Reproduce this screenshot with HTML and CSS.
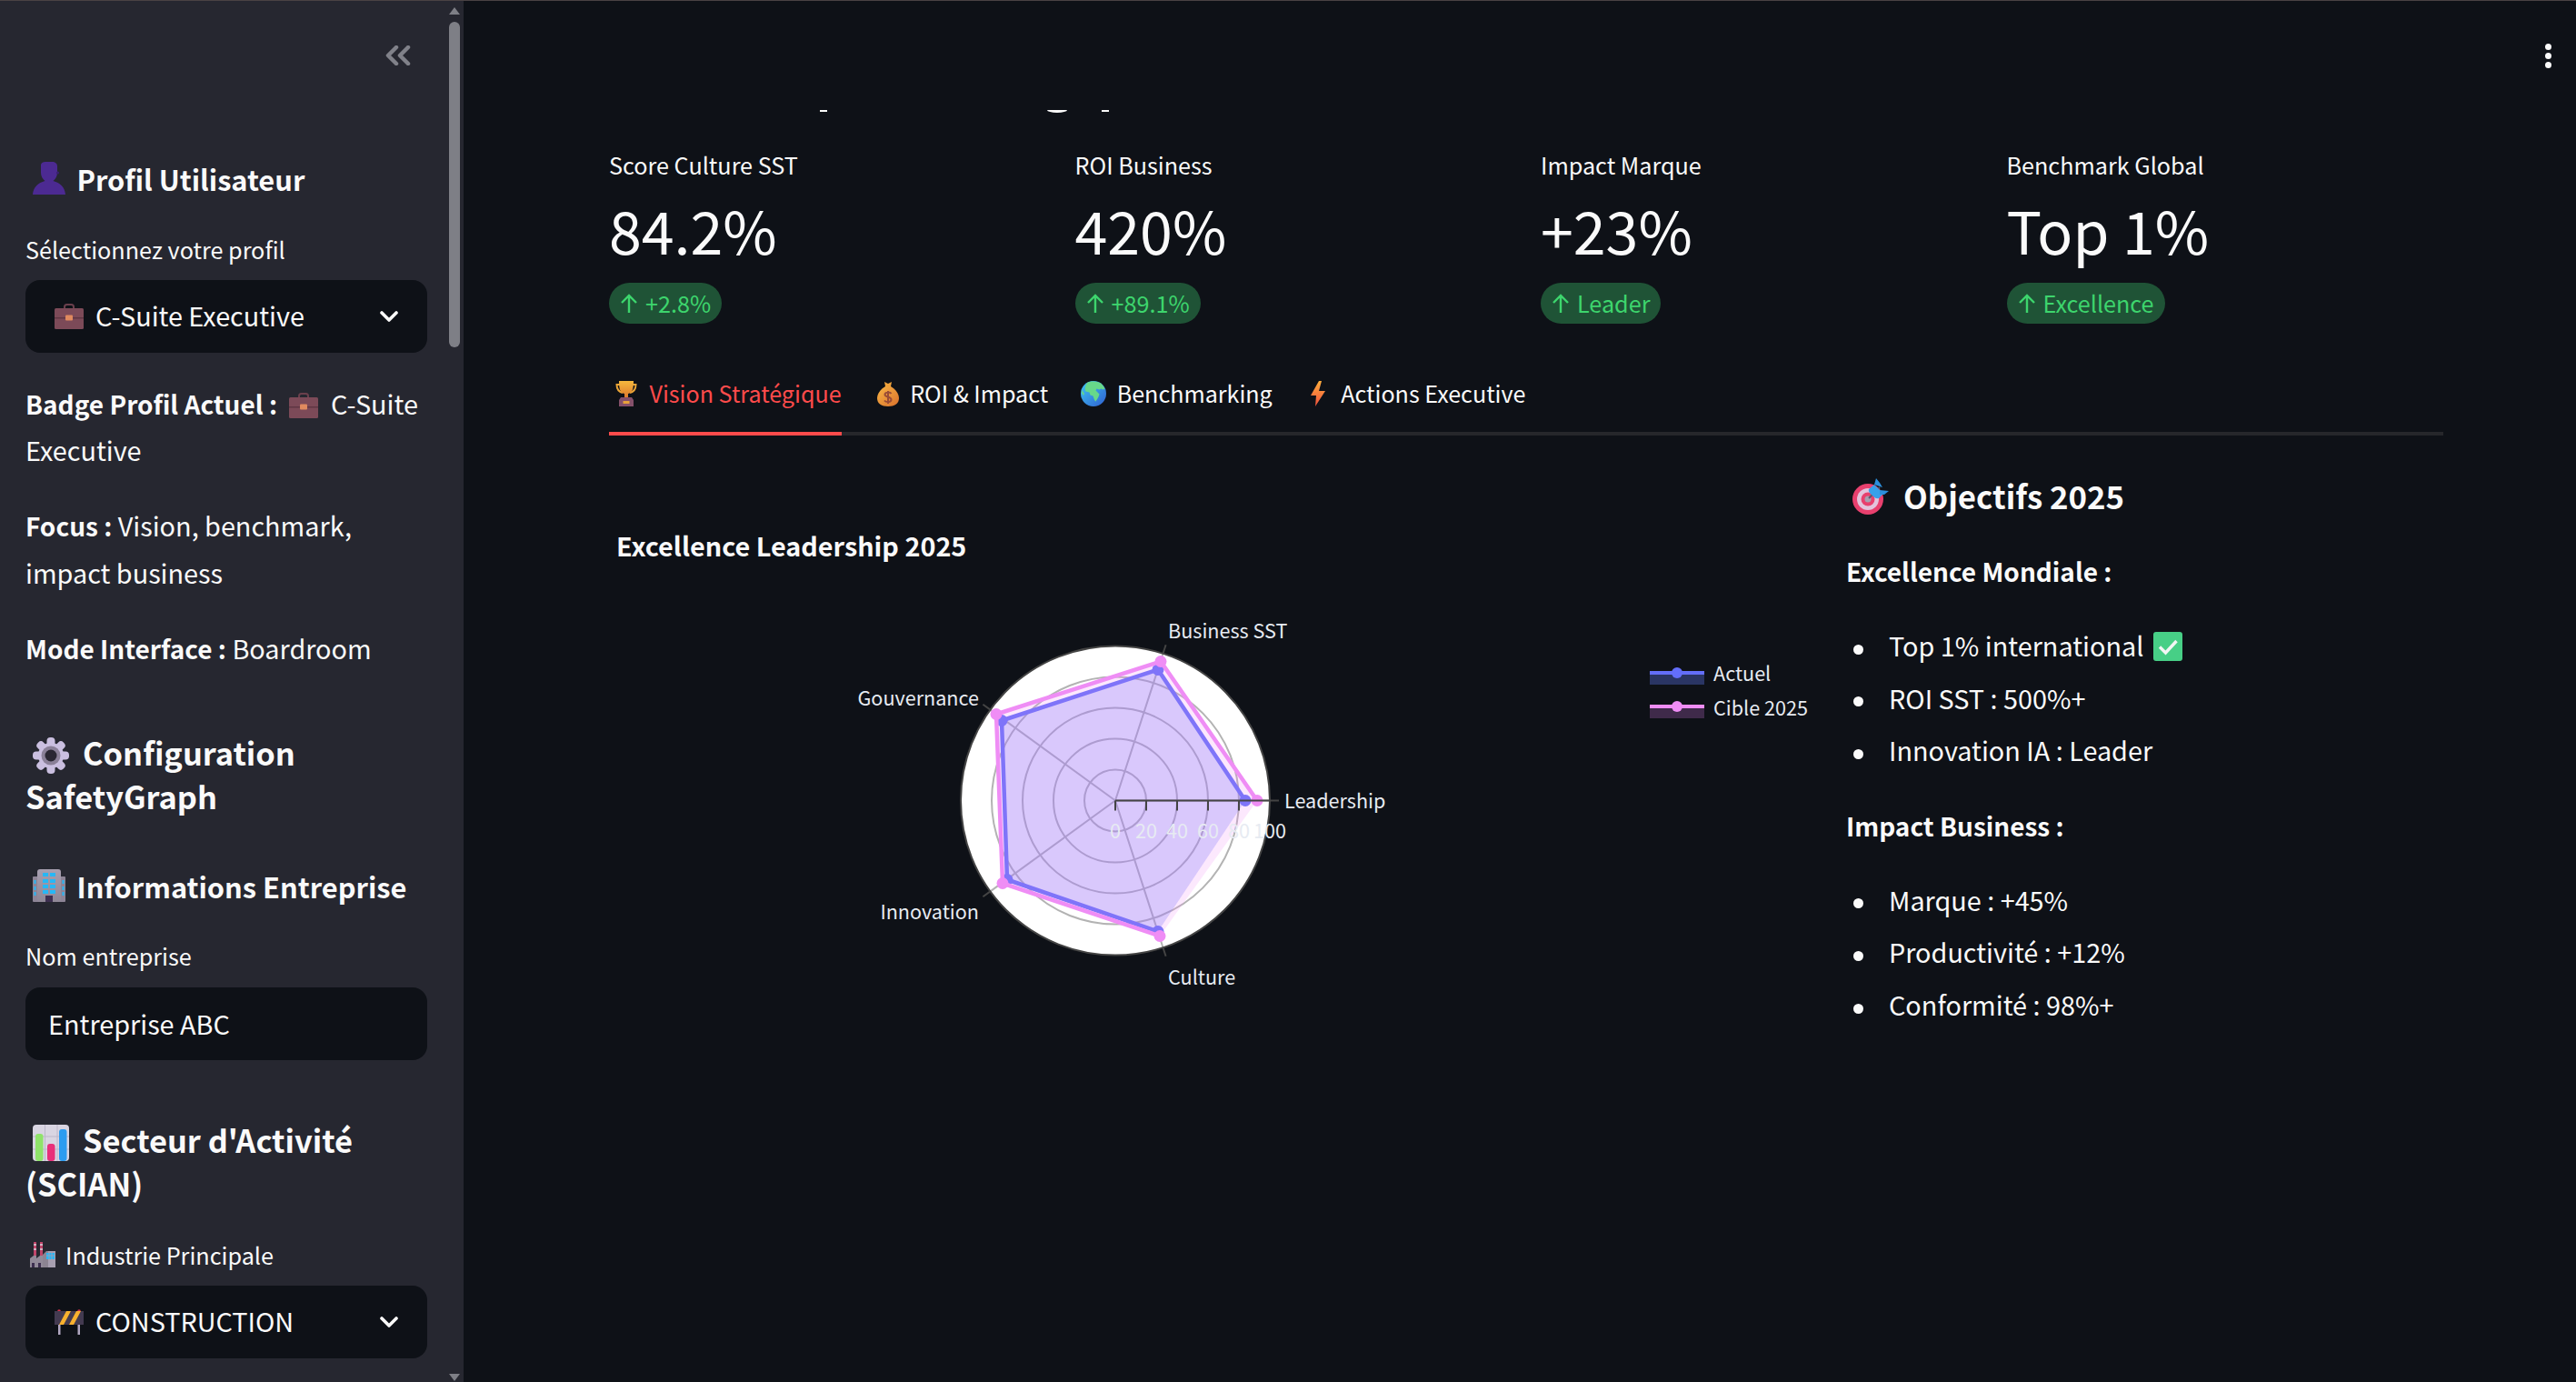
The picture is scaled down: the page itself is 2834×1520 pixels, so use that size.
FILE: index.html
```html
<!DOCTYPE html>
<html lang="fr">
<head>
<meta charset="utf-8">
<title>SafetyGraph</title>
<link rel="stylesheet" href="styles.css">
</head>
<body>
<svg class="defs" width="0" height="0" aria-hidden="true">
  <defs>
    <linearGradient id="gTrophy" x1="0" y1="0" x2="0" y2="1"><stop offset="0" stop-color="#f5b93e"/><stop offset="1" stop-color="#dd7a2c"/></linearGradient>
    <linearGradient id="gBag" x1="0" y1="0" x2="1" y2="1"><stop offset="0" stop-color="#f8b545"/><stop offset="1" stop-color="#d9702c"/></linearGradient>
    <linearGradient id="gBolt" x1="0" y1="0" x2="0" y2="1"><stop offset="0" stop-color="#fdae3d"/><stop offset="1" stop-color="#f0503c"/></linearGradient>
    <linearGradient id="gGlobe" x1="0" y1="0" x2="1" y2="1"><stop offset="0" stop-color="#3fc7f5"/><stop offset="1" stop-color="#2f5fd0"/></linearGradient>
    <linearGradient id="gBuild" x1="0" y1="0" x2="0" y2="1"><stop offset="0" stop-color="#a79fb0"/><stop offset="1" stop-color="#8f8796"/></linearGradient>
    <symbol id="i-person" viewBox="0 0 36 36">
      <path d="M9 3.500C9 1.500 11 0 14 0h7c4 0 6 2 6 5v7c0 4-2 7-4.500 9 7.500 2 13 7 13.500 15H0c.5-8 6-13 13.500-15C11 19 9 16 9 12z" fill="#4c2a92"/>
      <circle cx="27.500" cy="12" r="1.600" fill="#3a2070"/>
    </symbol>
    <symbol id="i-case" viewBox="0 0 32 28">
      <path d="M11 6V3.500C11 2 12 1 13.500 1h5C20 1 21 2 21 3.500V6" fill="none" stroke="#6a3f4c" stroke-width="2"/>
      <rect y="5" width="32" height="23" rx="1.500" fill="#7c4a58"/>
      <rect y="15" width="32" height="1.500" fill="#5f3643"/>
      <rect x="12" y="12.500" width="8" height="6" rx="1" fill="#e08a5f"/>
    </symbol>
    <symbol id="i-gear" viewBox="0 0 40 40">
      <g fill="#cabfe0">
        <circle cx="20" cy="20" r="14"/>
        <rect x="15.500" y="0" width="9" height="40" rx="4"/>
        <rect x="15.500" y="0" width="9" height="40" rx="4" transform="rotate(45 20 20)"/>
        <rect x="15.500" y="0" width="9" height="40" rx="4" transform="rotate(90 20 20)"/>
        <rect x="15.500" y="0" width="9" height="40" rx="4" transform="rotate(135 20 20)"/>
      </g>
      <circle cx="20" cy="20" r="10.500" fill="#8a8098"/>
      <circle cx="20" cy="20" r="6.500" fill="#2a2733"/>
    </symbol>
    <symbol id="i-build" viewBox="0 0 36 36">
      <rect y="8" width="36" height="28" rx="1" fill="#8d8496"/>
      <rect x="5" y="0" width="26" height="36" rx="3" fill="url(#gBuild)"/>
      <g fill="#27b7f5">
        <rect x="11" y="4" width="6" height="4"/><rect x="19" y="4" width="6" height="4"/>
        <rect x="11" y="11" width="6" height="4"/><rect x="19" y="11" width="6" height="4"/>
        <rect x="11" y="17" width="6" height="4"/><rect x="19" y="17" width="6" height="4"/>
        <rect x="11" y="23" width="6" height="4"/><rect x="19" y="23" width="6" height="4"/>
        <rect x="1.500" y="12" width="2" height="4"/><rect x="1.500" y="19" width="2" height="4"/><rect x="1.500" y="25" width="2" height="4"/>
        <rect x="32.500" y="12" width="2" height="4"/><rect x="32.500" y="19" width="2" height="4"/><rect x="32.500" y="25" width="2" height="4"/>
      </g>
      <rect x="14" y="29" width="8" height="7" fill="#3d2f50"/>
    </symbol>
    <symbol id="i-chart" viewBox="0 0 40 40">
      <rect width="40" height="40" rx="4" fill="#d9d5e2"/>
      <path d="M13.500 0v40M27 0v40M0 13h40M0 27h40" stroke="#bdb7ca" stroke-width="1"/>
      <rect x="3" y="10" width="8.500" height="30" rx="3" fill="#8fe36a"/>
      <rect x="16" y="21" width="8.500" height="19" rx="3" fill="#e8307a"/>
      <rect x="29" y="5" width="8.500" height="35" rx="3" fill="#2c9cf0"/>
    </symbol>
    <symbol id="i-factory" viewBox="0 0 28 28">
      <rect x="4" y="0" width="3" height="16" fill="#c0456a"/><rect x="11" y="0" width="3" height="16" fill="#c0456a"/>
      <path d="M4 3h3M4 8h3M11 3h3M11 8h3" stroke="#d8d2dd" stroke-width="1.500"/>
      <path d="M0 28V18l4-3h3v3l4-3h3v13z" fill="#928a99"/>
      <rect x="18" y="10" width="10" height="18" fill="#a79fb0"/>
      <path d="M14 28V14l4-4h2v18z" fill="#8c8492"/>
      <g fill="#27b7f5"><rect x="18" y="12" width="9" height="7"/></g>
      <path d="M21 12v7M24 12v7M18 15h9" stroke="#a79fb0" stroke-width=".8"/>
      <path d="M2 28v-5h3v5zM9 28v-5h3v5z" fill="#3d2f50"/>
    </symbol>
    <symbol id="i-barrier" viewBox="0 0 32 28">
      <rect x="4" y="14" width="2.500" height="14" fill="#b0a6c0"/>
      <rect x="25.500" y="14" width="2.500" height="14" fill="#b0a6c0"/>
      <circle cx="5" cy="2" r="1.800" fill="#d6304a"/><circle cx="27" cy="2" r="1.800" fill="#d6304a"/>
      <rect y="2" width="32" height="15" fill="#433a50"/>
      <path d="M5 17 13 2h5l-8 15zM16 17 24 2h5l-8 15z" fill="#f8b12e"/>
    </symbol>
    <symbol id="i-trophy" viewBox="0 0 24 28">
      <path d="M5 4H1.500c0 5 2.500 8 6.500 9M19 4h3.500c0 5-2.500 8-6.500 9" fill="none" stroke="#e9a437" stroke-width="2"/>
      <path d="M4 0h16c0 8-1 13-6 14v4h-4v-4C5 13 4 8 4 0z" fill="url(#gTrophy)"/>
      <path d="M6 18h12l2 3v7H4v-7z" fill="#84506a"/>
      <rect x="8.500" y="22" width="7" height="3" fill="#e8a23a"/>
    </symbol>
    <symbol id="i-bag" viewBox="0 0 24 28">
      <path d="M8 1 12 3l4-2-1 5H9z" fill="#f0a23a"/>
      <path d="M9 6h6c5 3 9 8 9 13 0 6-5 9-12 9S0 25 0 19C0 14 4 9 9 6z" fill="url(#gBag)"/>
      <path d="M15.500 14c-1-2-7-2-7 1s7 2 7 5.500-6 3-7.500 1M12 11v14" fill="none" stroke="#9a4c36" stroke-width="2"/>
    </symbol>
    <symbol id="i-globe" viewBox="0 0 28 28">
      <circle cx="14" cy="14" r="14" fill="url(#gGlobe)"/>
      <path d="M7 2c3-2 9-2 13-.5 3 1 5 4 6.500 7l-2 1-2-1-2 1-3-1-1 2 4 4c-1 4-3 6-4 8-1 0-2-3-3-6l-3-1-1-3-4-1C4 9 5 5 7 2zM1 10l3 4-1 2-2-3z" fill="#67d88a"/>
    </symbol>
    <symbol id="i-bolt" viewBox="0 0 16 28">
      <path d="M9 0 0 16h6l-1 12 11-17H9l3-11z" fill="url(#gBolt)"/>
    </symbol>
    <symbol id="i-target" viewBox="0 0 40 40">
      <circle cx="17" cy="23" r="17" fill="#e8406e"/>
      <circle cx="17" cy="23" r="12" fill="#e3c4dc"/>
      <circle cx="17" cy="23" r="7.500" fill="#e8406e"/>
      <circle cx="17" cy="23" r="3.500" fill="#a79fb0"/>
      <path d="M18 22 30 10" stroke="#5b5a6e" stroke-width="2"/>
      <path d="M18 12 24 7l10 10-5 5c-3 1-5-1-7-3s-5-4-4-7z" fill="#38a0ea"/>
      <path d="M24 7 26 0l4 5 3 5zM30 13l10 1-5 4-5 0z" fill="#2c8fdc"/>
    </symbol>
    <symbol id="i-check" viewBox="0 0 32 32">
      <rect width="32" height="32" rx="3" fill="#47cf86"/>
      <path d="M7 16.500 13.500 23 25.500 10" fill="none" stroke="#f2f6f4" stroke-width="3.400"/>
    </symbol>
    <symbol id="i-chev" viewBox="0 0 20 12">
      <path d="M2 2 10 10 18 2" fill="none" stroke="#fafafa" stroke-width="3.600" stroke-linecap="round" stroke-linejoin="round"/>
    </symbol>
    <symbol id="i-up" viewBox="0 0 20 22">
      <path d="M10 21V2M2 10l8-8 8 8" fill="none" stroke="#3dd56d" stroke-width="2.400"/>
    </symbol>
  </defs>
</svg>

<div class="topline"></div>
<div class="app">
  <aside class="sidebar">
    <div class="side-track">
      <span class="arrow-up"></span>
      <span class="thumb"></span>
    </div>
    <span class="arrow-down"></span>
    <div class="collapse">
      <svg class="collapse-icon" viewBox="0 0 28 22"><path d="M12 2 3 11l9 9M25 2l-9 9 9 9" fill="none" stroke="#808189" stroke-width="4.500" stroke-linecap="round" stroke-linejoin="round"/></svg>
    </div>

    <h3 class="side-h3 m-profile"><svg class="ico ico-h3"><use href="#i-person"/></svg>Profil Utilisateur</h3>
    <div class="label m-l1">Sélectionnez votre profil</div>
    <div class="select m-s"><svg class="ico ico-sel"><use href="#i-case"/></svg><span class="sel-text">C-Suite Executive</span><svg class="chev"><use href="#i-chev"/></svg></div>
    <p class="side-p m-badge"><b>Badge Profil Actuel :</b> <svg class="ico ico-inline"><use href="#i-case"/></svg> C-Suite Executive</p>
    <p class="side-p m-p"><b>Focus :</b> Vision, benchmark, impact business</p>
    <p class="side-p m-p"><b>Mode Interface :</b> Boardroom</p>
    <h2 class="side-h2 m-config"><svg class="ico ico-h2"><use href="#i-gear"/></svg>Configuration SafetyGraph</h2>
    <h3 class="side-h3 m-info"><svg class="ico ico-h3"><use href="#i-build"/></svg>Informations Entreprise</h3>
    <div class="label m-l2">Nom entreprise</div>
    <div class="input m-s2">Entreprise ABC</div>
    <h2 class="side-h2 m-sect"><svg class="ico ico-h2"><use href="#i-chart"/></svg>Secteur d'Activité (SCIAN)</h2>
    <div class="label m-l3"><svg class="ico ico-label"><use href="#i-factory"/></svg>Industrie Principale</div>
    <div class="select m-s"><svg class="ico ico-sel"><use href="#i-barrier"/></svg><span class="sel-text">CONSTRUCTION</span><svg class="chev"><use href="#i-chev"/></svg></div>
  </aside>

  <main class="main">
    <div class="kebab"><span></span><span></span><span></span></div>
    <div class="cut" aria-hidden="true"><span class="c1"></span><span class="c2"></span><span class="c3"></span></div>

    <section class="metrics">
      <div class="metric"><div class="m-label">Score Culture SST</div><div class="m-value">84.2%</div><div class="m-delta"><svg class="up"><use href="#i-up"/></svg>+2.8%</div></div>
      <div class="metric"><div class="m-label">ROI Business</div><div class="m-value">420%</div><div class="m-delta"><svg class="up"><use href="#i-up"/></svg>+89.1%</div></div>
      <div class="metric"><div class="m-label">Impact Marque</div><div class="m-value">+23%</div><div class="m-delta"><svg class="up"><use href="#i-up"/></svg>Leader</div></div>
      <div class="metric"><div class="m-label">Benchmark Global</div><div class="m-value">Top 1%</div><div class="m-delta"><svg class="up"><use href="#i-up"/></svg>Excellence</div></div>
    </section>

    <nav class="tabs">
      <div class="tab active"><svg class="ico ico-tab ico-trophy"><use href="#i-trophy"/></svg>Vision Stratégique</div>
      <div class="tab"><svg class="ico ico-tab ico-bag"><use href="#i-bag"/></svg>ROI &amp; Impact</div>
      <div class="tab"><svg class="ico ico-tab ico-globe"><use href="#i-globe"/></svg>Benchmarking</div>
      <div class="tab"><svg class="ico ico-tab ico-bolt"><use href="#i-bolt"/></svg>Actions Executive</div>
    </nav>

    <section class="content">
      <div class="chart-col">
        <div class="chart-title">Excellence Leadership 2025</div>
        <svg class="radar" viewBox="0 0 1329 480" width="1329" height="480">
          <g transform="translate(557 240.500)">
            <circle r="170" fill="#fff"/>
            <g fill="none" stroke="#b3b3b3" stroke-width="2">
              <circle r="34"/><circle r="68"/><circle r="102"/><circle r="136"/>
              <path d="M0 0H170M0 0 52.500 -161.700M0 0 -137.500 -99.900M0 0 -137.500 99.900M0 0 52.500 161.700"/>
            </g>
            <path d="M143 0 47 -144 -125 -88 -119 87 47 144Z" fill="#636efa" fill-opacity=".28"/>
            <path d="M143 0 47 -144 -125 -88 -119 87 47 144" fill="none" stroke="#636efa" stroke-width="4.500" stroke-linejoin="round"/>
            <g fill="#636efa"><circle cx="143" r="6.500"/><circle cx="47" cy="-144" r="6.500"/><circle cx="-125" cy="-88" r="6.500"/><circle cx="-119" cy="87" r="6.500"/><circle cx="47" cy="144" r="6.500"/></g>
            <path d="M156 0 50 -153 -131 -95 -124 91 49 149Z" fill="#ef8df5" fill-opacity=".2"/>
            <path d="M156 0 50 -153 -131 -95 -124 91 49 149" fill="none" stroke="#ef8df5" stroke-width="4.500" stroke-linejoin="round"/>
            <g fill="#ef8df5"><circle cx="156" r="6.500"/><circle cx="50" cy="-153" r="6.500"/><circle cx="-131" cy="-95" r="6.500"/><circle cx="-124" cy="91" r="6.500"/><circle cx="49" cy="149" r="6.500"/></g>
            <circle r="170" fill="none" stroke="#444" stroke-width="2"/>
            <path d="M170 0H180M52.500 -161.700 55.600 -171.200M-137.500 -99.900 -145.600 -105.800M-137.500 99.900 -145.600 105.800M52.500 161.700 55.600 171.200" stroke="#444" stroke-width="2"/>
            <path d="M0 0H170M0 0V11M34 0V11M68 0V11M102 0V11M136 0V11" stroke="#444" stroke-width="2" fill="none"/>
            <g class="tick-label" text-anchor="middle">
              <text y="41">0</text><text x="34" y="41">20</text><text x="68" y="41">40</text><text x="102" y="41">60</text><text x="136" y="41">80</text><text x="170" y="41">100</text>
            </g>
          </g>
          <g class="axis-label">
            <text x="615" y="62">Business SST</text>
            <text x="407" y="136" text-anchor="end">Gouvernance</text>
            <text x="743" y="249">Leadership</text>
            <text x="407" y="371" text-anchor="end">Innovation</text>
            <text x="615" y="443">Culture</text>
          </g>
          <g>
            <rect x="1145" y="100" width="60" height="13" fill="#2a3564"/>
            <path d="M1145 100H1205" stroke="#636efa" stroke-width="4"/>
            <circle cx="1175" cy="100" r="6" fill="#636efa"/>
            <rect x="1145" y="137" width="60" height="13" fill="#3f2a4a"/>
            <path d="M1145 137H1205" stroke="#ef8df5" stroke-width="4"/>
            <circle cx="1175" cy="137" r="6" fill="#ef8df5"/>
            <text class="legend-text" x="1215" y="109">Actuel</text>
            <text class="legend-text" x="1215" y="147">Cible 2025</text>
          </g>
        </svg>
      </div>
      <div class="goal-col">
        <h3 class="goal-h"><svg class="ico ico-target"><use href="#i-target"/></svg>Objectifs 2025</h3>
        <p class="goal-p"><b>Excellence Mondiale :</b></p>
        <ul class="goal-list">
          <li>Top 1% international <svg class="ico ico-check"><use href="#i-check"/></svg></li>
          <li>ROI SST : 500%+</li>
          <li>Innovation IA : Leader</li>
        </ul>
        <p class="goal-p"><b>Impact Business :</b></p>
        <ul class="goal-list">
          <li>Marque : +45%</li>
          <li>Productivité : +12%</li>
          <li>Conformité : 98%+</li>
        </ul>
      </div>
    </section>
  </main>
</div>
</body>
</html>
```

FILE: styles.css
```css
* { box-sizing: border-box; }
html, body { margin: 0; padding: 0; height: 100%; overflow: hidden; }
body {
  background: #0e1117;
  color: #fafafa;
  font-family: "Noto Sans CJK JP", "Noto Sans", sans-serif;
  font-size: 28.8px;
}
.defs { position: absolute; }
.topline { height: 1px; background: #4a4243; }
.app { display: flex; height: 1519px; overflow: hidden; }
.ico { display: inline-block; flex: none; vertical-align: middle; }

/* sidebar */
.sidebar {
  position: relative;
  flex: 0 0 510px;
  height: 1519px;
  background: #262730;
  padding: 0 40px 0 28px;
  overflow: hidden;
}
.side-track { position: absolute; top: 7px; left: 494px; width: 12px; display: flex; flex-direction: column; align-items: center; gap: 8px; }
.arrow-up { width: 0; height: 0; border-left: 6px solid transparent; border-right: 6px solid transparent; border-bottom: 8px solid #7e7f86; }
.arrow-down { position: absolute; left: 494px; top: 1510px; width: 0; height: 0; border-left: 6px solid transparent; border-right: 6px solid transparent; border-top: 8px solid #7e7f86; }
.thumb { width: 12px; height: 358px; background: #7e7f86; border-radius: 6px; }
.collapse { display: flex; justify-content: flex-end; padding: 49px 18px 0 0; }
.collapse-icon { width: 28px; height: 22px; display: block; }

.side-h3 { margin: 0; font-size: 30.8px; line-height: 45px; height: 48px; font-weight: 700; display: flex; align-items: flex-start; }
.side-h2 { margin: 0; font-size: 34.4px; line-height: 48px; height: 96px; font-weight: 700; }
.label { font-size: 25.2px; line-height: 32px; height: 36px; display: flex; align-items: flex-start; }
.select, .input { background: #0e1117; border-radius: 16px; height: 80px; display: flex; align-items: center; font-size: 28.8px; }
.select { padding: 0 32px; }
.input { padding: 0 0 1px 25px; }
.sel-text { margin-left: 13px; flex: 1; padding-bottom: 3px; }
.chev { width: 20px; height: 12px; flex: none; }
.side-p { margin: 0; font-size: 28.8px; line-height: 51.2px; }
b { font-weight: 700; font-size: 28px; line-height: 1; }

.ico-h3 { width: 36px; height: 36px; margin: 4px 12.500px 0 8px; }
.ico-h2 { width: 40px; height: 40px; margin: -4px 15px 0 8px; }
.ico-sel { width: 32px; height: 28px; }
.ico-inline { width: 32px; height: 28px; margin: -4px 7px 0; }
.ico-label { width: 28px; height: 28px; margin: 2px 11px 0 5px; }

.m-profile { margin-top: 102px; }
.m-l1 { margin-top: 36px; }
.m-s { margin-top: 14px; }
.m-badge { margin-top: 30px; }
.m-p { margin-top: 32px; }
.m-config { margin-top: 65px; }
.m-info { margin-top: 53px; }
.m-l2 { margin-top: 35px; }
.m-s2 { margin-top: 15px; }
.m-sect { margin-top: 63px; }
.m-l3 { margin-top: 39px; }

/* main */
.main { position: relative; flex: 1; padding: 120px 146px 0 160px; min-width: 0; }
.kebab { position: absolute; top: 47px; left: 2290px; display: flex; flex-direction: column; gap: 3px; }
.kebab span { width: 7px; height: 7px; border-radius: 50%; background: #fafafa; }
.cut { display: flex; height: 3px; padding-left: 232px; }
.c1, .c3 { width: 8px; height: 2px; background: #fafafa; }
.c2 { width: 22px; height: 3px; margin-left: 242px; background: #fafafa; border-radius: 0 0 50% 50% / 0 0 100% 100%; }
.c3 { margin-left: 38px; }

.metrics { display: grid; grid-template-columns: repeat(4, 1fr); column-gap: 32px; margin-top: 41px; }
.metric { display: flex; flex-direction: column; align-items: flex-start; }
.m-label { font-size: 25.2px; line-height: 33px; height: 36px; }
.m-value { font-size: 64.5px; line-height: 74px; height: 84px; margin-top: 14px; }
.m-delta { margin-top: 12px; height: 45px; border-radius: 23px; background: #1f5336; color: #3dd56d; font-size: 25.2px; line-height: 44px; padding: 0 12px; display: flex; align-items: flex-start; gap: 8px; }
.up { width: 20px; height: 22px; margin-top: 12px; }

.tabs { display: flex; gap: 33.500px; margin-top: 50px; border-bottom: 4px solid #26272b; height: 73px; }
.tab { height: 73px; padding-top: 4px; line-height: 44px; font-size: 25.1px; display: flex; align-items: flex-start; }
.tab.active { color: #ff4b4b; border-bottom: 4px solid #ff4b4b; }
.ico-tab { height: 28px; }
.ico-trophy { width: 24px; margin: 9px 13.500px 0 7px; }
.ico-bag { width: 24px; margin: 9px 12px 0 6px; }
.ico-globe { width: 28px; margin: 9px 12px 0 2px; }
.ico-bolt { width: 16px; margin: 9px 17px 0 9px; }

.content { display: grid; grid-template-columns: 1329px 1fr; column-gap: 32px; }
.chart-col { padding-top: 101px; }
.chart-title { font-weight: 700; font-size: 28.8px; line-height: 40px; padding-left: 8px; }
.radar { display: block; margin-top: 20px; }
.radar text { font-family: "Noto Sans CJK JP", "Noto Sans", sans-serif; font-size: 21.6px; }
.tick-label text { fill: #e7ebf2; }
.axis-label text, .legend-text { fill: #e7ebf2; }

.goal-col { padding-top: 44px; }
.goal-h { margin: 0; font-size: 34.8px; line-height: 44px; height: 48px; font-weight: 700; display: flex; align-items: flex-start; }
.ico-target { width: 40px; height: 40px; margin: 3px 16px 0 7px; }
.goal-p { margin: 31px 0 0; line-height: 51.2px; }
.goal-list { margin: 31px 0 0; padding: 0; list-style: none; }
.goal-list li { line-height: 51.2px; margin-bottom: 6.4px; }
.goal-list li::before { content: ""; display: inline-block; width: 11px; height: 11px; border-radius: 50%; background: #fafafa; margin: 0 28px 0 8px; vertical-align: middle; }
.ico-check { width: 32px; height: 32px; margin-left: 4px; vertical-align: -5px; }
```
